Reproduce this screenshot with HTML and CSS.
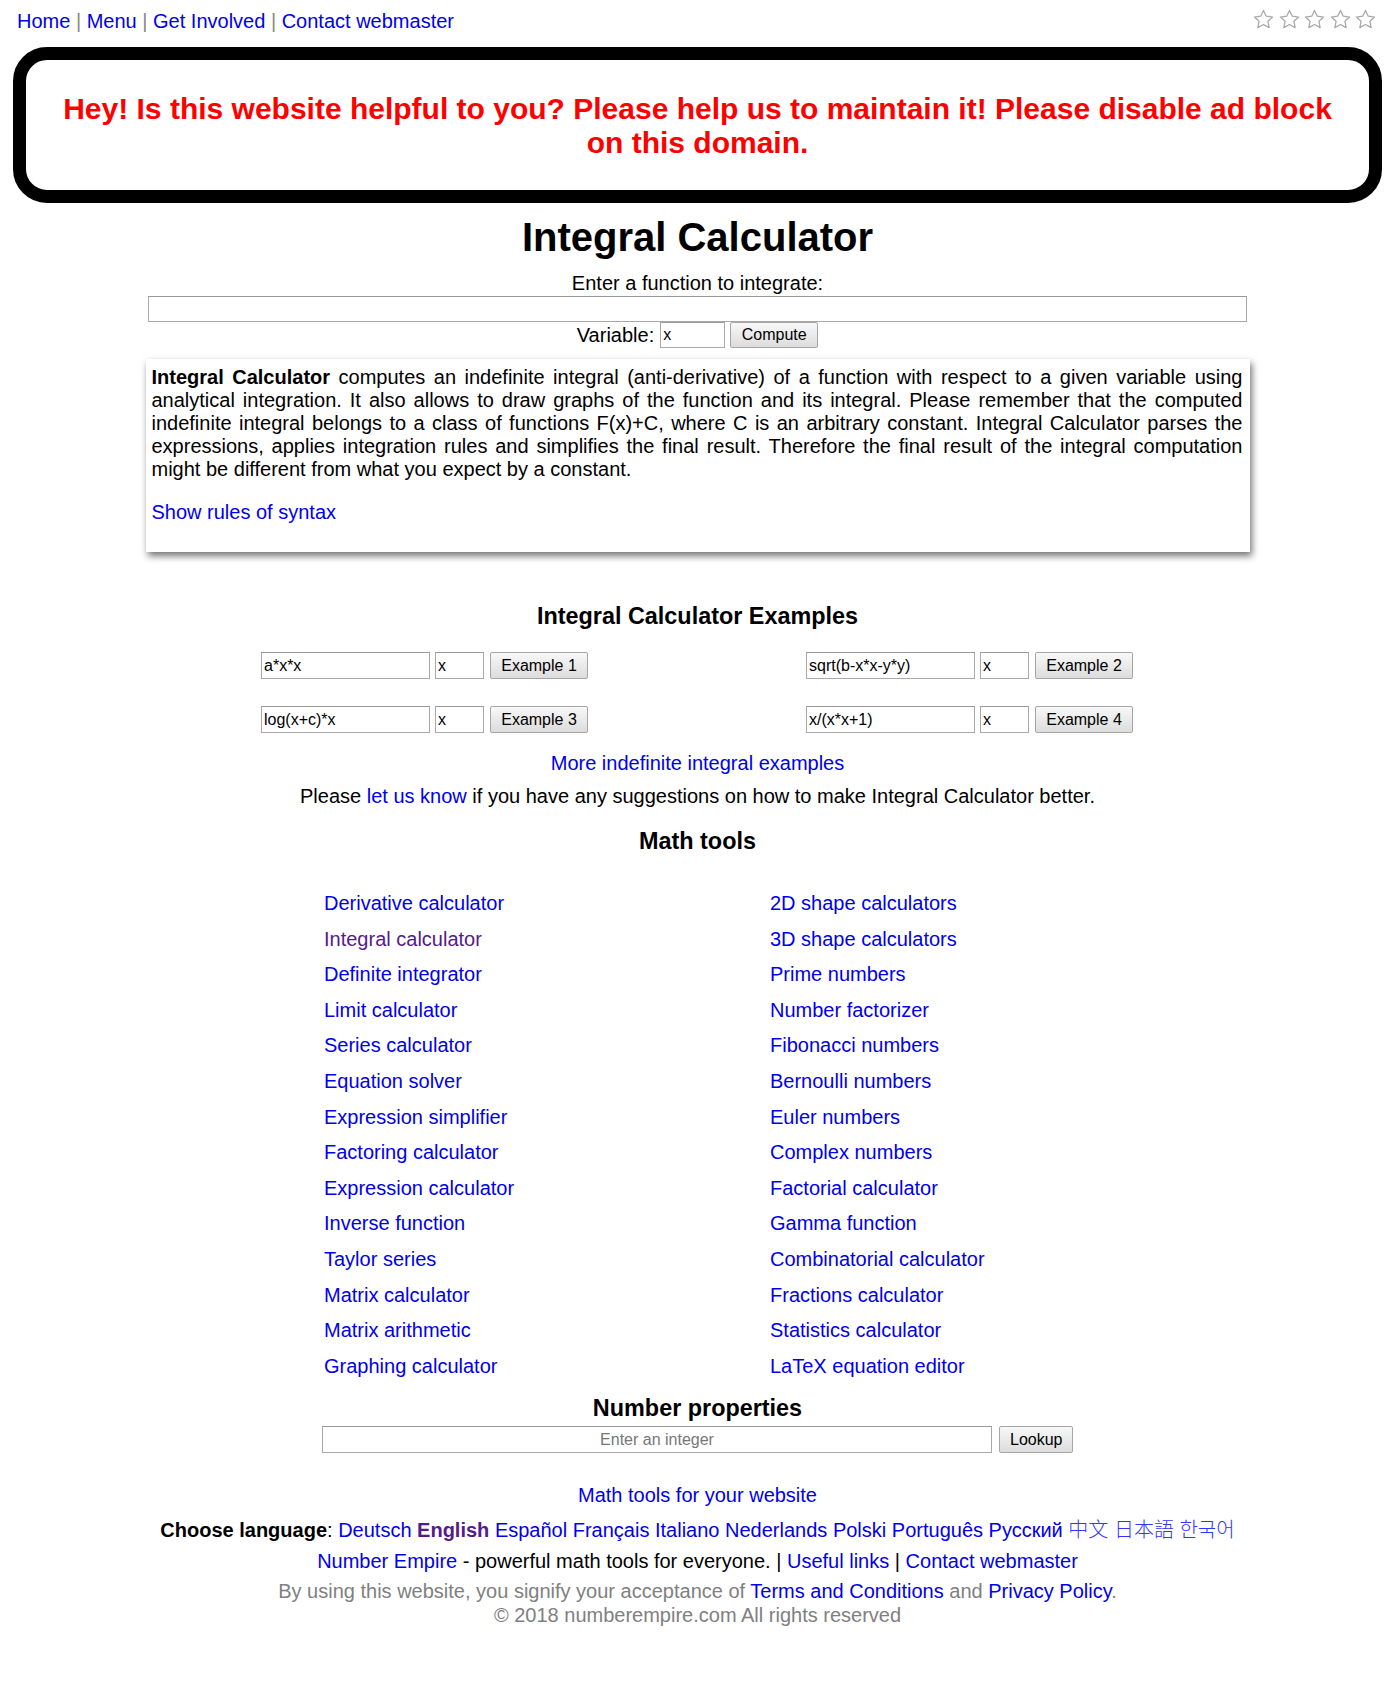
FILE: index.html
```html
<!DOCTYPE html>
<html lang="en">
<head>
<meta charset="utf-8">
<title>Integral Calculator</title>
<link rel="stylesheet" href="styles.css">
</head>
<body>
<div class="topbar">
  <div class="nav"><a href="#">Home</a> <span class="sep">|</span> <a href="#">Menu</a> <span class="sep">|</span> <a href="#">Get Involved</a> <span class="sep">|</span> <a href="#">Contact webmaster</a></div>
  <div class="stars">
    <svg viewBox="0 0 24 24"><polygon points="12,2.5 14.9,8.6 21.5,9.4 16.6,13.9 17.9,20.5 12,17.2 6.1,20.5 7.4,13.9 2.5,9.4 9.1,8.6"/></svg>
    <svg viewBox="0 0 24 24"><polygon points="12,2.5 14.9,8.6 21.5,9.4 16.6,13.9 17.9,20.5 12,17.2 6.1,20.5 7.4,13.9 2.5,9.4 9.1,8.6"/></svg>
    <svg viewBox="0 0 24 24"><polygon points="12,2.5 14.9,8.6 21.5,9.4 16.6,13.9 17.9,20.5 12,17.2 6.1,20.5 7.4,13.9 2.5,9.4 9.1,8.6"/></svg>
    <svg viewBox="0 0 24 24"><polygon points="12,2.5 14.9,8.6 21.5,9.4 16.6,13.9 17.9,20.5 12,17.2 6.1,20.5 7.4,13.9 2.5,9.4 9.1,8.6"/></svg>
    <svg viewBox="0 0 24 24"><polygon points="12,2.5 14.9,8.6 21.5,9.4 16.6,13.9 17.9,20.5 12,17.2 6.1,20.5 7.4,13.9 2.5,9.4 9.1,8.6"/></svg>
  </div>
</div>
<div class="page">
  <div class="adbox">Hey! Is this website helpful to you? Please help us to maintain it! Please disable ad block on this domain.</div>

  <h1 class="title">Integral Calculator</h1>
  <div class="prompt">Enter a function to integrate:</div>
  <input class="field func-input" type="text">
  <div class="var-row">
    <span>Variable:</span>
    <input class="field var-input" type="text" value="x">
    <button class="btn compute">Compute</button>
  </div>

  <div class="desc">
    <p class="desc-text"><b>Integral Calculator</b> computes an indefinite integral (anti-derivative) of a function with respect to a given variable using analytical integration. It also allows to draw graphs of the function and its integral. Please remember that the computed indefinite integral belongs to a class of functions F(x)+C, where C is an arbitrary constant. Integral Calculator parses the expressions, applies integration rules and simplifies the final result. Therefore the final result of the integral computation might be different from what you expect by a constant.</p>
    <p class="desc-link"><a href="#">Show rules of syntax</a></p>
  </div>

  <h3 class="section-title examples-title">Integral Calculator Examples</h3>
  <div class="examples">
    <div class="ex-row">
      <div class="ex-group"><input class="field ex-func" type="text" value="a*x*x"><input class="field ex-var" type="text" value="x"><button class="btn ex-btn">Example 1</button></div>
      <div class="ex-group"><input class="field ex-func" type="text" value="sqrt(b-x*x-y*y)"><input class="field ex-var" type="text" value="x"><button class="btn ex-btn">Example 2</button></div>
    </div>
    <div class="ex-row">
      <div class="ex-group"><input class="field ex-func" type="text" value="log(x+c)*x"><input class="field ex-var" type="text" value="x"><button class="btn ex-btn">Example 3</button></div>
      <div class="ex-group"><input class="field ex-func" type="text" value="x/(x*x+1)"><input class="field ex-var" type="text" value="x"><button class="btn ex-btn">Example 4</button></div>
    </div>
  </div>
  <div class="more"><a href="#">More indefinite integral examples</a></div>
  <div class="suggest">Please <a href="#">let us know</a> if you have any suggestions on how to make Integral Calculator better.</div>

  <h3 class="section-title tools-title">Math tools</h3>
  <div class="tools">
    <ul class="tool-col left-col">
      <li><a href="#">Derivative calculator</a></li>
      <li><a href="#" class="visited">Integral calculator</a></li>
      <li><a href="#">Definite integrator</a></li>
      <li><a href="#">Limit calculator</a></li>
      <li><a href="#">Series calculator</a></li>
      <li><a href="#">Equation solver</a></li>
      <li><a href="#">Expression simplifier</a></li>
      <li><a href="#">Factoring calculator</a></li>
      <li><a href="#">Expression calculator</a></li>
      <li><a href="#">Inverse function</a></li>
      <li><a href="#">Taylor series</a></li>
      <li><a href="#">Matrix calculator</a></li>
      <li><a href="#">Matrix arithmetic</a></li>
      <li><a href="#">Graphing calculator</a></li>
    </ul>
    <ul class="tool-col">
      <li><a href="#">2D shape calculators</a></li>
      <li><a href="#">3D shape calculators</a></li>
      <li><a href="#">Prime numbers</a></li>
      <li><a href="#">Number factorizer</a></li>
      <li><a href="#">Fibonacci numbers</a></li>
      <li><a href="#">Bernoulli numbers</a></li>
      <li><a href="#">Euler numbers</a></li>
      <li><a href="#">Complex numbers</a></li>
      <li><a href="#">Factorial calculator</a></li>
      <li><a href="#">Gamma function</a></li>
      <li><a href="#">Combinatorial calculator</a></li>
      <li><a href="#">Fractions calculator</a></li>
      <li><a href="#">Statistics calculator</a></li>
      <li><a href="#">LaTeX equation editor</a></li>
    </ul>
  </div>

  <h3 class="section-title numprop-title">Number properties</h3>
  <div class="lookup-row">
    <input class="field lookup-input" type="text" placeholder="Enter an integer">
    <button class="btn lookup-btn">Lookup</button>
  </div>

  <div class="footer-link"><a href="#">Math tools for your website</a></div>
  <div class="languages"><b>Choose language</b>: <a href="#">Deutsch</a> <a href="#" class="visited lang-current">English</a> <a href="#">Español</a> <a href="#">Français</a> <a href="#">Italiano</a> <a href="#">Nederlands</a> <a href="#">Polski</a> <a href="#">Português</a> <a href="#">Русский</a> <a href="#" class="cjk">中文</a> <a href="#" class="cjk">日本語</a> <a href="#" class="cjk">한국어</a></div>
  <div class="brand-line"><a href="#">Number Empire</a> - powerful math tools for everyone. | <a href="#">Useful links</a> | <a href="#">Contact webmaster</a></div>
  <div class="legal">By using this website, you signify your acceptance of <a href="#">Terms and Conditions</a> and <a href="#">Privacy Policy</a>.<br>© 2018 numberempire.com All rights reserved</div>
</div>
</body>
</html>
```

FILE: styles.css
```css
* { box-sizing: border-box; }

body {
  margin: 0;
  font-family: "Liberation Sans", Arial, sans-serif;
  font-size: 20px;
  line-height: 23px;
  color: #000;
  background: #fff;
}

a { color: #0000ee; text-decoration: none; }
a.visited { color: #551a8b; }

.topbar {
  display: flex;
  justify-content: space-between;
  align-items: flex-start;
  height: 33px;
  padding: 10px 8px 0 17px;
}
.nav .sep { color: #888; }

.stars { display: flex; gap: 2.5px; margin-top: -2px; }
.stars svg { width: 23px; height: 23px; }
.stars polygon { fill: #fff; stroke: #a8a8a8; stroke-width: 1.3; stroke-linejoin: round; }

.page { margin-left: 13px; width: 1369px; }

.adbox {
  margin-top: 14px;
  border: 13px solid #000;
  border-radius: 34px;
  padding: 32px 20px 30px;
  text-align: center;
  color: #ff0000;
  font-weight: bold;
  font-size: 30px;
  line-height: 34px;
}

.title {
  margin: 11px 0 0;
  text-align: center;
  font-size: 40px;
  line-height: 46px;
  font-weight: bold;
}

.prompt { margin-top: 12px; text-align: center; }

.field {
  border: 1px solid #a9a9a9;
  border-top-color: #999;
  background: #fff;
  font-family: "Liberation Sans", Arial, sans-serif;
  font-size: 16px;
  padding: 1px 2px;
  color: #000;
  margin: 0;
  outline: none;
}

.btn {
  font-family: "Liberation Sans", Arial, sans-serif;
  font-size: 16px;
  color: #000;
  background: linear-gradient(#f8f8f8, #dcdcdc);
  border: 1px solid #a6a6a6;
  border-radius: 2px;
  padding: 0 10px;
  margin: 0;
}

.func-input { display: block; margin: 1px auto 0; width: 1099px; height: 26px; }

.var-row {
  display: flex;
  justify-content: center;
  align-items: center;
  height: 26px;
  margin-top: 0;
}
.var-input { width: 65px; height: 26px; margin-left: 6px; }
.compute { width: 88px; height: 26px; margin-left: 5px; }

.desc {
  width: 1104px;
  margin: 11px auto 0;
  padding: 7px 7px 28px 6px;
  background: #fff;
  box-shadow: 2px 4px 7px rgba(0, 0, 0, 0.55);
}
.desc-text { margin: 0; text-align: justify; }
.desc-link { margin: 20px 0 0; }

.section-title {
  margin: 0;
  text-align: center;
  font-size: 23.4px;
  line-height: 27px;
  font-weight: bold;
}
.examples-title { margin-top: 51px; }

.examples {
  width: 872px;
  margin: 22px 0 0 248px;
  display: flex;
  flex-direction: column;
  gap: 27px;
}
.ex-row { display: flex; justify-content: space-between; }
.ex-group { display: flex; align-items: center; }
.ex-func { width: 169px; height: 27px; }
.ex-var { width: 49px; height: 27px; margin-left: 5px; }
.ex-btn { width: 98px; height: 27px; margin-left: 6px; }

.more { margin-top: 19px; text-align: center; }
.suggest { margin-top: 10px; text-align: center; }

.tools-title { margin-top: 20px; }

.tools {
  display: flex;
  margin: 31px 0 0 311px;
}
.tool-col {
  list-style: none;
  margin: 0;
  padding: 0;
}
.tool-col li { line-height: 35.6px; }
.left-col { width: 446px; }

.numprop-title { margin-top: 11px; }

.lookup-row {
  display: flex;
  justify-content: center;
  margin-top: 4px;
}
.lookup-input { width: 670px; height: 27px; text-align: center; }
.lookup-input::placeholder { color: #777; }
.lookup-btn { width: 74px; height: 27px; margin-left: 7px; }

.footer-link { margin-top: 31px; text-align: center; }
.languages { margin-top: 10px; text-align: center; }
.lang-current { font-weight: bold; }
.cjk { font-family: "Noto Sans CJK SC", "Noto Sans CJK JP", "Noto Sans CJK KR", sans-serif; font-weight: 300; color: #3333ff; }
.brand-line { margin-top: 8px; text-align: center; }
.legal { margin-top: 6px; text-align: center; color: #808080; line-height: 24px; }
```
